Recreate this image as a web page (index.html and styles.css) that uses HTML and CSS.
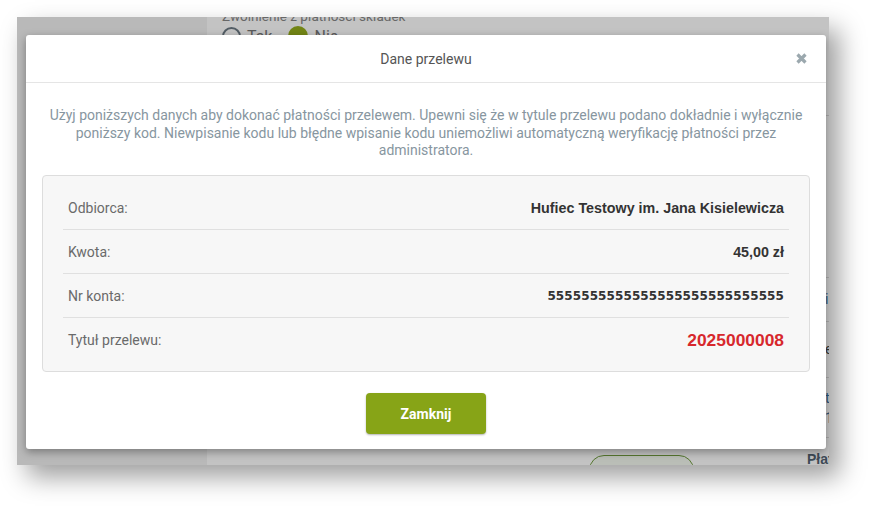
FILE: index.html
```html
<!DOCTYPE html>
<html lang="pl">
<head>
<meta charset="utf-8">
<title>Dane przelewu</title>
<link rel="stylesheet" href="styles.css">
</head>
<body>
<div class="shot">
  <div class="app">
    <aside class="sidebar"></aside>
    <main class="main">
      <div class="content">
        <div class="field-label">Zwolnienie z płatności składek</div>
        <div class="radios">
          <span class="radio"></span><span class="radio-text">Tak</span>
          <span class="radio checked"></span><span class="radio-text">Nie</span>
        </div>
        <div class="outline-btn"></div>
      </div>
      <div class="side-col">
        <div class="side-row r1"></div>
        <div class="side-row r2"><span class="blue">i</span></div>
        <div class="side-row r3"><span>e</span></div>
        <div class="side-row r4"><span class="blue">t<br>1</span></div>
        <div class="side-row r5"><span class="strong">Płat</span></div>
      </div>
    </main>
  </div>
  <div class="backdrop"></div>
  <div class="modal">
    <div class="modal-header">
      <h4 class="modal-title">Dane przelewu</h4>
      <span class="close" aria-label="Zamknij">
        <svg width="11" height="11" viewBox="0 0 11 11"><path d="M1.5 1.5 L9.5 9.5 M9.5 1.5 L1.5 9.5" stroke="#9ba8ae" stroke-width="3.2" stroke-linecap="butt"/></svg>
      </span>
    </div>
    <div class="modal-body">
      <p class="info">Użyj poniższych danych aby dokonać płatności przelewem. Upewni się że w tytule przelewu podano dokładnie i wyłącznie poniższy kod. Niewpisanie kodu lub błędne wpisanie kodu uniemożliwi automatyczną weryfikację płatności przez administratora.</p>
      <div class="panel">
        <div class="row"><span class="label">Odbiorca:</span><span class="value">Hufiec Testowy im. Jana Kisielewicza</span></div>
        <div class="row"><span class="label">Kwota:</span><span class="value">45,00 zł</span></div>
        <div class="row"><span class="label">Nr konta:</span><span class="value account">5555555555555555555555555555</span></div>
        <div class="row"><span class="label">Tytuł przelewu:</span><span class="value code">2025000008</span></div>
      </div>
      <div class="actions"><button class="btn">Zamknij</button></div>
    </div>
  </div>
</div>
</body>
</html>
```

FILE: styles.css
```css
html, body {
  margin: 0;
  padding: 0;
  background: #fff;
}
body {
  width: 877px;
  height: 513px;
  overflow: hidden;
  font-family: Roboto, "Liberation Sans", sans-serif;
}
.shot {
  position: relative;
  margin: 17px 0 0 17px;
  width: 812px;
  height: 448px;
  overflow: hidden;
  box-shadow: 10px 12px 24px rgba(0, 0, 0, 0.38);
}
.app {
  display: flex;
  height: 100%;
}
.sidebar {
  width: 190px;
  flex: none;
  background: #f1f1f1;
}
.main {
  flex: 1;
  display: flex;
  background: #fefefe;
}
.content {
  flex: 1;
  display: flex;
  flex-direction: column;
  padding-left: 15px;
}
.field-label {
  margin-top: -9px;
  font-size: 13.5px;
  line-height: 16px;
  color: #868686;
}
.radios {
  display: flex;
  align-items: center;
  margin-top: 2px;
  font-size: 16px;
  color: #777;
}
.radio {
  width: 15px;
  height: 15px;
  border: 2px solid #6c7a84;
  border-radius: 50%;
}
.radio.checked {
  width: 20px;
  height: 20px;
  border: 0;
  background: #96ae1c;
}
.radio-text {
  margin: 0 16px 0 6px;
}
.outline-btn {
  margin-top: auto;
  margin-left: 367px;
  margin-bottom: -22px;
  width: 103px;
  height: 30px;
  border: 1px solid #6f9a3e;
  border-radius: 15px;
  background: #f3f8ee;
}
.side-col {
  width: 22px;
  flex: none;
  display: flex;
  flex-direction: column;
  font-size: 14px;
  color: #444;
}
.side-row {
  border-top: 1px solid #dcdcdc;
  overflow: hidden;
}
.r1 { margin-top: 98px; height: 161px; }
.r2 { height: 43px; line-height: 43px; }
.r3 { height: 55px; line-height: 55px; }
.r4 { height: 60px; line-height: 20px; padding-top: 10px; box-sizing: border-box; }
.r5 { flex: 1; display: flex; align-items: flex-end; border-top: 1px solid #dcdcdc; }
.side-row span { display: block; padding-left: 18px; }
.blue { color: #3d6f99; }
.strong { font-weight: bold; color: #526272; padding-left: 0 !important; line-height: 16px; margin-bottom: -2px; font-family: "Liberation Sans", sans-serif; }
.backdrop {
  position: absolute;
  inset: 0;
  background: rgba(0, 0, 0, 0.23);
}
.modal {
  position: absolute;
  left: 9px;
  top: 18px;
  width: 800px;
  height: 414px;
  background: #fff;
  border-radius: 3px;
  box-shadow: 0 3px 8px rgba(0, 0, 0, 0.35);
  box-sizing: border-box;
}
.modal-header {
  position: relative;
  height: 48px;
  border-bottom: 1px solid #e5e5e5;
  display: flex;
  align-items: center;
  justify-content: center;
  box-sizing: border-box;
}
.modal-title {
  margin: 0;
  font-size: 14px;
  font-weight: normal;
  color: #555;
}
.close {
  position: absolute;
  right: 19px;
  top: 18px;
  width: 11px;
  height: 11px;
  display: block;
}
.close svg { display: block; }
.modal-body {
  padding: 24px 16px 16px 16px;
}
.info {
  margin: 0 0 15.5px;
  text-align: center;
  font-size: 14px;
  line-height: 17.5px;
  color: #8796a0;
}
.panel {
  background: #f7f7f7;
  border: 1px solid #dddddd;
  border-radius: 4px;
  padding: 10px 20px 9px;
}
.row {
  height: 44px;
  display: flex;
  align-items: center;
  justify-content: space-between;
  padding: 0 5px;
  border-bottom: 1px solid #e0e0e0;
  box-sizing: border-box;
}
.row:last-child { border-bottom: 0; }
.label {
  font-size: 14px;
  color: #6a6a6a;
}
.value {
  font-family: "Liberation Sans", Arial, sans-serif;
  font-weight: bold;
  font-size: 14.3px;
  color: #333;
}
.value.account {
  font-family: "DejaVu Sans", sans-serif;
  font-size: 12px;
  letter-spacing: 0.1px;
}
.value.code {
  font-size: 17.4px;
  color: #d7282d;
}
.actions {
  display: flex;
  justify-content: center;
  margin-top: 21px;
}
.btn {
  width: 120px;
  height: 41px;
  border: 0;
  border-radius: 4px;
  background: #87a417;
  color: #fff;
  font-family: Roboto, sans-serif;
  font-weight: bold;
  font-size: 14px;
  box-shadow: 0 1px 2px rgba(0, 0, 0, 0.3);
}
```
